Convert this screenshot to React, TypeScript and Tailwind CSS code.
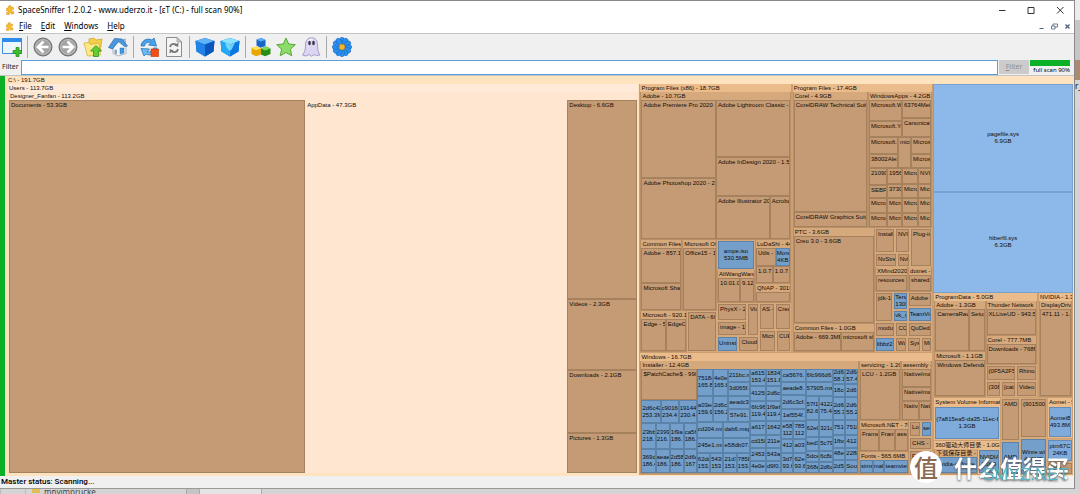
import type { CSSProperties, ReactNode } from "react";

type Tone = "tan" | "blue" | "sky" | "bright" | "light";

type Block = {
  kind: "leaf" | "group" | "row" | "col";
  size: number;
  label?: string;
  sub?: string;
  tone?: string;
  items?: Block[];
};

const leaf = (size: number, label: string, tone: Tone = "tan", sub?: string): Block => ({ kind: "leaf", size, label, tone, sub });
const file = (size: number, label: string, sub?: string): Block => leaf(size, label, "blue", sub);
const group = (size: number, label: string, tone: string, ...items: Block[]): Block => ({ kind: "group", size, label, tone, items });
const row = (size: number, ...items: Block[]): Block => ({ kind: "row", size, items });
const col = (size: number, ...items: Block[]): Block => ({ kind: "col", size, items });
const shaded = (block: Block): Block => ({ ...block, tone: "shaded" });

const LEAF_TONES: Record<string, string> = {
  tan: "bg-[#c49b74] border-[#a5815e]",
  light: "bg-[#ffe6d0] border-[#ffe6d0]",
  blue: "bg-[#739fca] border-[#5b82a8]",
  sky: "bg-[#7eabdb] border-[#648bb5]",
  bright: "bg-[#8db9ea] border-[#78a1d0]",
};

const GROUP_TONES: Record<string, string> = {
  root: "bg-[#ffe3bf] border-[#ffe3bf]",
  users: "bg-[#ffe9d9] border-[#ffe3bf]",
  profile: "bg-[#ffe6d0] border-[#ffe3bf]",
  top: "bg-[#eabb8b] border-[#cb9f72]",
  mid: "bg-[#d6a97c] border-[#b98f68]",
};

const USERS = group(633, "Users - 113.7GB", "users",
  group(1, "Designer_Fanfan - 113.2GB", "profile",
    row(1,
      leaf(296, "Documents - 53.3GB"),
      leaf(262, "AppData - 47.3GB", "light"),
      col(70,
        leaf(198, "Desktop - 6.6GB"),
        leaf(71, "Videos - 2.3GB"),
        leaf(63, "Downloads - 2.1GB"),
        leaf(40, "Pictures - 1.3GB"),
      ),
    ),
  ),
);

const PROGRAMS_X86 = group(152, "Program Files (x86) - 18.7GB", "top",
  group(148, "Adobe - 10.7GB", "mid",
    row(1,
      col(75, leaf(77, "Adobe Premiere Pro 2020 - 3.1GB"), leaf(61, "Adobe Photoshop 2020 - 2.4GB")),
      col(74,
        leaf(56, "Adobe Lightroom Classic - 2.1GB"),
        leaf(39, "Adobe InDesign 2020 - 1.5GB"),
        row(43, leaf(54, "Adobe Illustrator 2020"), leaf(20, "Acrobat")),
      ),
    ),
  ),
  shaded(row(111,
    col(77,
      row(70,
        group(42, "Common Files - 1.3GB", "mid", leaf(35, "Adobe - 857.1MB"), leaf(26, "Microsoft Shared")),
        group(35, "Microsoft Office", "mid", leaf(1, "Office15 - 1GB")),
      ),
      row(41,
        group(47, "Microsoft - 920.1MB", "mid", row(1, leaf(24, "Edge - 500MB"), leaf(20, "EdgeCore"))),
        leaf(30, "DATA - 600MB"),
      ),
    ),
    col(74,
      row(62,
        col(38,
          file(30, "ampe.iso", "530.5MB"),
          group(32, "AliWangWang", "mid", row(1, leaf(22, "10.01.03"), leaf(14, "9.12.1"))),
        ),
        col(36,
          group(44, "LuDaShi - 440MB", "mid",
            row(18, leaf(20, "Utils - 80MB"), file(14, "More", "4KB")),
            row(17, leaf(17, "1.0.7.1"), leaf(17, "1.0.7.2")),
          ),
          group(18, "QNAP - 301MB", "mid", leaf(1, "")),
        ),
      ),
      row(49,
        col(42,
          row(33, col(30, leaf(18, "PhysX - 200MB"), leaf(15, "image - 190MB")), leaf(12, "Vid")),
          row(15, file(21, "Uninstall"), leaf(20, "Cloud")),
        ),
        col(32,
          row(27, leaf(16, "AS - 1"), leaf(16, "Creo")),
          row(21, leaf(16, "Micro"), leaf(14, "CUE")),
        ),
      ),
    ),
  )),
);

const PROGRAMS = group(141, "Program Files - 17.4GB", "top",
  row(136,
    group(75, "Corel - 4.9GB", "mid",
      leaf(111, "CorelDRAW Technical Suite"),
      leaf(15, "CorelDRAW Graphics Suite"),
    ),
    group(64, "WindowsApps - 4.2GB", "mid",
      row(37,
        col(33, leaf(21, "Microsoft.Windows"), leaf(16, "Microsoft.YourPhone")),
        col(29, leaf(18, "63764Meitu"), leaf(19, "CanonicalGroup")),
      ),
      row(30,
        col(29, leaf(16, "Microsoft.Skype"), leaf(14, "38002Alexander")),
        leaf(13, "micro"),
        col(20, leaf(16, "Microsoft"), leaf(14, "Microsoft")),
      ),
      row(30,
        col(18, leaf(17, "21090P"), leaf(13, "SEBFox")),
        col(15, leaf(16, "19568"), leaf(14, "37308")),
        col(16, leaf(16, "Microso"), leaf(14, "Microso")),
        col(13, leaf(16, "NVIDIA"), leaf(14, "Micro")),
      ),
      row(29,
        col(18, leaf(1, "Microsoft"), leaf(1, "Microsoft")),
        col(15, leaf(1, "Micros"), leaf(1, "Micros")),
        col(16, leaf(1, "Micros"), leaf(1, "Micros")),
        col(13, leaf(1, "Micros"), leaf(1, "Micros")),
      ),
    ),
  ),
  shaded(row(123,
    col(82,
      group(95, "PTC - 3.6GB", "mid", leaf(1, "Creo 3.0 - 3.6GB")),
      group(28, "Common Files - 1.0GB", "mid", row(1, leaf(47, "Adobe - 669.3MB"), leaf(33, "microsoft shared"))),
    ),
    col(57,
      row(38,
        col(35,
          row(24, leaf(20, "Installer2"), leaf(15, "NVIDIA")),
          row(14, leaf(21, "NvStreamSrv"), leaf(13, "NvDLISR")),
        ),
        leaf(22, "Plug-ins"),
      ),
      row(24,
        group(33, "XMind2020", "mid", leaf(1, "resources - 1")),
        group(24, "dotnet - 200", "mid", leaf(1, "shared - 1")),
      ),
      row(30,
        leaf(18, "jdk-11"),
        col(14, file(18, "Tencent", "130M"), file(12, "vk_swift")),
        col(24, leaf(15, "Adobe Genuine"), file(15, "TeamViewer")),
      ),
      row(15, leaf(20, "modules"), leaf(12, "CCX"), leaf(24, "QuDedup")),
      row(14, file(20, "libbz2-1"), leaf(12, "Wac"), leaf(14, "Sys"), leaf(11, "Mic")),
    ),
  )),
);

const WINDOWS = group(122, "Windows - 16.7GB", "top",
  row(1,
    group(218, "Installer - 12.4GB", "mid",
      row(1,
        col(55,
          leaf(31, "$PatchCache$ - 990MB"),
          row(23, file(19, "2d6c42", "253.3M"), file(18, "c9016", "234.4"), file(18, "19144", "230.4")),
          row(25, file(14, "23bb", "218."), file(14, "2399", "216."), file(14, "1f9a", "186."), file(13, "ca56", "186.")),
          row(24, file(14, "369d", "186.4"), file(14, "aeae", "186."), file(14, "2d58", "186."), file(13, "2d6c", "167")),
        ),
        col(53,
          row(27, file(16, "7518c", "165.8"), file(15, "4e0e", "165.8"), col(22, file(13, "211bc.m"), file(14, "3d065f."))),
          row(26, file(16, "a03ec", "159.9"), file(15, "2d6cc", "156.2"), col(22, file(13, "aeadc3"), file(13, "57e91."))),
          row(15, file(1, "cd204.ms"), file(1, "dab6.msp")),
          row(15, file(1, "245e1.ms"), file(1, "e58db07.")),
          row(20, file(1, "62dc", "153."), file(1, "543f", "153."), file(1, "21d7", "153."), file(1, "7858", "153.")),
        ),
        col(31,
          row(17, file(1, "a615", "153.4"), file(1, "1834", "151.8")),
          row(15, file(1, "4125f"), file(1, "2d6c")),
          row(20, file(1, "6fc96", "119.4"), file(1, "1f9a6", "119.4")),
          row(13, file(1, "a617"), file(1, "1642")),
          row(13, file(1, "cd15b"), file(1, "211e")),
          row(13, file(1, "2453"), file(1, "543a")),
          row(12, file(1, "4e0e"), file(1, "d9f0.")),
        ),
        col(24,
          file(13, "ca5676."),
          file(13, "aeade8."),
          file(14, "2d6c3cf."),
          file(12, "1af554f."),
          row(17, file(1, "e58d", "112"), file(1, "785", "112")),
          row(14, file(1, "412"), file(1, "a03")),
          row(20, file(1, "3d7e", "93.6"), file(1, "62e", "93.6")),
        ),
        col(27,
          file(13, "6fc966d6."),
          file(14, "57905.ms"),
          row(24, file(1, "57f1", "82.6"), file(1, "4122", "75.4")),
          row(16, file(1, "62e0"), file(1, "321c")),
          row(14, file(1, "bed3"), file(1, "5c79")),
          row(11, file(1, "5dce"), file(1, "6c8d")),
          row(11, file(1, "368e"), file(1, "2d6c")),
        ),
        col(25,
          row(15, file(1, "2d6c", "58.1"), file(1, "2d6c", "57.4")),
          row(13, file(1, "18c4"), file(1, "2d6")),
          row(23, file(1, "2d6c", "55.3"), file(1, "2d6c", "55.2")),
          row(14, file(1, "7514"), file(1, "7518")),
          row(13, file(1, "1fbc"), file(1, "412")),
          row(12, file(1, "48e8"), file(1, "2288")),
          row(13, file(1, "2d58"), file(1, "Sour")),
        ),
      ),
    ),
    col(73,
      row(60,
        group(42, "servicing - 1.2GB", "mid", leaf(1, "LCU - 1.2GB")),
        group(31, "assembly - 1GB", "mid",
          leaf(18, "NativeImages"),
          leaf(14, "NativeImages"),
          row(18, leaf(17, "Native"), leaf(13, "Nati")),
        ),
      ),
      shaded(row(53,
        col(50,
          group(31, "Microsoft.NET - 700MB", "mid", row(1, leaf(19, "Framework"), leaf(16, "Frame"), leaf(13, "assem"))),
          group(22, "Fonts - 565.6MB", "mid", row(1, file(13, "simsun"), file(12, "malg"), file(24, "teamviewer"))),
        ),
        col(23,
          row(16, leaf(12, "Loc"), file(11, "setup")),
          leaf(13, "CHS - 8"),
          leaf(24, "Fonts"),
        ),
      )),
    ),
  ),
);

const SYSTEM = col(140,
  leaf(108, "pagefile.sys", "bright", "6.9GB"),
  leaf(100, "hiberfil.sys", "bright", "6.3GB"),
  row(105,
    group(105, "ProgramData - 5.0GB", "top",
      row(1,
        col(50,
          group(51, "Adobe - 1.3GB", "mid", row(1, leaf(33, "CameraRaw"), leaf(15, "Setup"))),
          group(44, "Microsoft - 1.1GB", "mid", leaf(1, "Windows Defender")),
        ),
        shaded(col(50,
          group(35, "Thunder Network", "mid", leaf(1, "XLLiveUD - 943.5MB")),
          group(29, "Corel - 777.7MB", "mid", leaf(1, "Downloads - 768MB")),
          row(31,
            col(29, leaf(15, "{0F5A2F5C"), row(16, leaf(1, "{308"), leaf(1, "{cat"))),
            col(20, leaf(15, "Rhinoceros"), leaf(16, "Video")),
          ),
        )),
      ),
    ),
    group(35, "NVIDIA - 1.3GB", "top", group(1, "DisplayDriver", "mid", leaf(1, "471.11 - 1.2GB"))),
  ),
  shaded(row(77,
    col(68,
      group(43, "System Volume Information", "top", leaf(1, "{7a815ea5-da35-11ec-b", "sky", "1.3GB")),
      group(34, "360驱动大师目录 - 1.0GB", "top",
        row(1,
          group(43, "下载保存目录 - 1GB", "mid", file(1, "nvidia-geforce")),
          file(22, "NVIDIA", "25KB"),
        ),
      ),
    ),
    col(19, leaf(43, "AMD - 1"), file(34, "AMD")),
    col(27, leaf(40, "{90150000"), file(37, "Winre.wim", "400MB")),
    col(26,
      group(41, "Aomei - 500", "top", leaf(1, "AomeiBoot", "sky", "493.8M")),
      leaf(23, "ptm67C", "sky", "24KB"),
      leaf(13, "Micr"),
    ),
  )),
);

const DRIVE = group(1, "C:\\ - 191.7GB", "root",
  row(1, USERS, col(294, row(268, PROGRAMS_X86, PROGRAMS), WINDOWS), SYSTEM),
);

function tracks(items: Block[]) {
  return items.map((i) => `minmax(0,${i.size}fr)`).join(" ");
}

// packed cells share their borders, the others keep a gap around them
function Cell({ block, packed = false }: { block: Block; packed?: boolean }) {
  const items = block.items ?? [];

  if (block.kind === "leaf") {
    const centered = block.tone !== "tan" && block.tone !== "light";
    const loose = !packed && block.tone !== "bright";
    return (
      <div
        className={`flex flex-col overflow-hidden border ${LEAF_TONES[block.tone ?? "tan"]} ${loose ? "m-px" : ""} ${
          centered ? "justify-center text-center leading-[7px]" : "pl-px leading-2"
        }`}
      >
        <div>{block.label}</div>
        {block.sub && <div>{block.sub}</div>}
      </div>
    );
  }

  const shade = block.tone === "shaded" ? "bg-[#d6a97c]" : "";

  if (block.kind === "row") {
    const style: CSSProperties = { gridTemplateColumns: tracks(items) };
    return (
      <div className={`grid h-full min-h-0 grid-rows-1 ${shade}`} style={style}>
        {items.map((item, i) => <Cell key={i} block={item} packed={packed} />)}
      </div>
    );
  }

  const style: CSSProperties = { gridTemplateRows: tracks(items) };
  if (block.kind === "col") {
    return (
      <div className={`grid h-full min-h-0 grid-cols-1 ${shade}`} style={style}>
        {items.map((item, i) => <Cell key={i} block={item} packed={packed} />)}
      </div>
    );
  }

  const inner = packed || block.tone === "mid" || block.tone === "profile";
  return (
    <div className={`flex h-full min-h-0 min-w-0 flex-col overflow-hidden border border-t-0 ${GROUP_TONES[block.tone ?? "mid"]}`}>
      <div className="h-2 shrink-0 overflow-hidden pl-px leading-2">{block.label}</div>
      <div className="grid min-h-0 flex-1 grid-cols-1" style={style}>
        {items.map((item, i) => <Cell key={i} block={item} packed={inner} />)}
      </div>
    </div>
  );
}

function Puzzle({ className }: { className: string }) {
  return (
    <svg viewBox="0 0 20 20" className={className}>
      <path
        d="M3 6.5 7 5.7C6 3.5 7.2 1 9.6 1s3.4 2.3 2.6 4.1l4.2-.6.6 4.4c-2-1-3.7.3-3.5 2.1.2 2 2.2 2.5 3.8 1.8l.3 4.6-5.2.9c.5-2-.7-3.2-2.2-3-1.6.2-2.3 1.7-1.5 3.5l-5 .7-.5-4.6c2 .5 3-.6 2.8-2-.2-1.5-1.5-2-3.1-1.6z"
        fill="#f5bd2b"
        stroke="#d18b10"
        strokeWidth="1"
      />
    </svg>
  );
}

function Cube({ light }: { light?: boolean }) {
  return (
    <>
      <path d="M.5 4 10 1l9.500 3-1 10.500L10 19.500l-8.500-5z" fill="#0a63cf" />
      <path d="M.5 4 10 1l9.500 3L10 7.500z" fill={light ? "#8be4ff" : "#5fb4f8"} />
      <path d="M.5 4 10 7.500v12l-8.500-5z" fill={light ? "#23a9f5" : "#1f83e8"} />
      <path d="M10 7.500 19.500 4l-1 10.500-8.500 5z" fill={light ? "#0c78e2" : "#0b56bd"} />
      {light && <path d="M5 5.600 10 7.500l5-1.900-3 6.400-2 2-3-3z" fill="#8de9ff" opacity=".75" />}
    </>
  );
}

const RoundArrow = ({ flip }: { flip?: boolean }) => (
  <g transform={flip ? "matrix(-1 0 0 1 20 0)" : undefined}>
    <circle cx="10" cy="10" r="9" fill="#8b8b8b" stroke="#6e6e6e" />
    <circle cx="10" cy="10" r="7.500" fill="#a4a4a4" stroke="#c9c9c9" strokeWidth=".8" />
    <path d="M10.500 4.500 5 10l5.500 5.500M5.500 10H15.500" fill="none" stroke="#fff" strokeWidth="2.600" />
  </g>
);

const TOOLS: ({ label: string; art: ReactNode } | null)[] = [
  {
    label: "New view",
    art: (
      <>
        <path d="M.5 1.500h19v15H.5z" fill="#eef7ff" stroke="#3e8fe0" />
        <path d="M0 1h20v4H0z" fill="#2d8bea" />
        <path d="M14 10.500h3V13.500h3v3h-3V19.500h-3v-3h-3v-3h3z" fill="#3fbf2e" stroke="#238517" strokeWidth=".7" />
      </>
    ),
  },
  null,
  { label: "Back", art: <RoundArrow /> },
  { label: "Forward", art: <RoundArrow flip /> },
  {
    label: "Parent folder",
    art: (
      <>
        <path d="m6 2 5-1 2 2 6-1-2 13-11 1z" fill="#f3cf4c" stroke="#caa024" strokeWidth=".7" />
        <path d="m1 6 5-.5 1.500 2L16 6l1.500 12-13 1z" fill="#fde988" stroke="#d4aa2d" strokeWidth=".7" />
        <path d="m13 8.500 5.500 5.500H15.500v5.500h-5V14H7.500z" fill="#62cd35" stroke="#2f8f18" strokeWidth=".8" />
      </>
    ),
  },
  {
    label: "Home",
    art: (
      <>
        <path d="M5 9v7.500l5 2.500 8-2.500V8L12 4z" fill="#f3f6f9" stroke="#8b9cac" strokeWidth=".7" />
        <path d="M15 2h2.500v4.500L15 5z" fill="#a6bfd5" stroke="#7f97ab" strokeWidth=".4" />
        <path d="m.5 10.500 6-9L14 2l5.500 7-3 .5L10.500 4.500l-6 7.500z" fill="#4a97de" stroke="#1f5f9f" strokeWidth=".6" />
        <path d="M6.500 12.500 9 13v4.500l-2.500-1z" fill="#8ba3b8" />
        <path d="M12 11h4v5l-4 1z" fill="#3c97e6" stroke="#2469a8" strokeWidth=".4" />
      </>
    ),
  },
  null,
  {
    label: "Restart scan",
    art: (
      <>
        <path d="M2 9C2.500 3.500 8 .5 13 3l2-2 2.500 8-8-1L12 5.500C9 4.500 6 6 5.500 9z" fill="#4aa3ec" stroke="#1765b3" strokeWidth=".7" />
        <path d="M18 11c-.5 5.500-6 8.500-11 6l-2 2L2 11.500l8.500.5L8 14.500c3 1 6-.5 6.500-3.500z" fill="#6cbcf5" stroke="#1765b3" strokeWidth=".7" />
        <path d="M12 12h7.500v7.500H12z" fill="#f04d17" stroke="#bf3208" strokeWidth=".6" />
      </>
    ),
  },
  {
    label: "Refresh",
    art: (
      <>
        <path d="M2.500.5H13L17.500 5v14.500h-15z" fill="#f4f4f4" stroke="#8c8c8c" />
        <path d="M13 .5V5h4.500z" fill="#c9c9c9" stroke="#8c8c8c" strokeWidth=".6" />
        <path d="M6 10c.5-3 4-4 6.300-2.300M14 12c-.5 3-4 4-6.300 2.300" fill="none" stroke="#777" strokeWidth="1.800" />
        <path d="m14.500 5.500-.3 4.500-4-1.500zM5.500 16.500l.3-4.500 4 1.500z" fill="#777" />
      </>
    ),
  },
  null,
  { label: "Less detail", art: <Cube /> },
  { label: "More detail", art: <Cube light /> },
  null,
  {
    label: "File classes",
    art: (
      <>
        <path d="m5.500 2.500 5-1.500 4 2v6l-5 1.800-4-2.300z" fill="#1766c9" />
        <path d="m5.500 2.500 5-1.500 4 2-5 1.500z" fill="#63aef5" />
        <path d="m.5 11 5-1.500 4.500 2v6L5 19.300.5 17z" fill="#e8a600" />
        <path d="m.5 11 5-1.500 4.500 2-5 1.700z" fill="#ffe25b" />
        <path d="m10 11.500 5-2 4.500 2V17L14 19.300 10 17.500z" fill="#268d15" />
        <path d="m10 11.500 5-2 4.500 2-5.500 2z" fill="#7cdb53" />
      </>
    ),
  },
  {
    label: "Tagging",
    art: <path d="m10 1 2.700 6 6.600.7-4.900 4.500 1.400 6.600-5.800-3.300-5.800 3.300 1.400-6.600L.7 7.700 7.300 7z" fill="#8ddb68" stroke="#58a838" strokeLinejoin="round" />,
  },
  {
    label: "Ghost",
    art: (
      <>
        <path d="M4.500 8C4.500 3 7 .7 10.500.7S16.500 3 16.500 8c0 4 .5 7.500 2.500 10l-3.500.5-2.500-1-2.500 1.800L8 17.500l-3 1.500-3.500-1C4 15 4.500 12 4.500 8z" fill="#ddd6f3" stroke="#a79cc9" strokeWidth="1" />
        <path d="M7 4c1-2 3.500-2.500 5-2-3 1-4 5-4.500 11z" fill="#f8f6ff" />
        <ellipse cx="8.500" cy="6" rx="1.300" ry="2.200" fill="#383147" />
        <ellipse cx="12.500" cy="6" rx="1.300" ry="2.200" fill="#383147" />
      </>
    ),
  },
  null,
  {
    label: "Settings",
    art: (
      <>
        {[0, 30, 60, 90, 120, 150, 180, 210, 240, 270, 300, 330].map((a) => (
          <ellipse key={a} cx="10" cy="4" rx="2.500" ry="3.800" fill="#2a8fee" stroke="#0f5fb8" strokeWidth=".5" transform={`rotate(${a} 10 10)`} />
        ))}
        <circle cx="10" cy="10" r="3" fill="#f2b52c" stroke="#a87a10" strokeWidth=".6" />
      </>
    ),
  },
];

const MENUS = ["File", "Edit", "Windows", "Help"];

function TitleBar() {
  return (
    <header className="flex h-[18px] shrink-0 items-center bg-white pl-[5px]">
      <Puzzle className="size-[10px]" />
      <h1 className="ml-[3px] flex-1 text-[8px] text-black">SpaceSniffer 1.2.0.2 - www.uderzo.it - [εT (C:) - full scan 90%]</h1>
      <div className="flex text-[#333]">
        <button aria-label="Minimize" className="grid h-[18px] w-[29px] place-items-center">
          <svg viewBox="0 0 8 8" className="size-2" fill="none" stroke="currentColor"><path d="M1 4.500h6.500" /></svg>
        </button>
        <button aria-label="Maximize" className="grid h-[18px] w-[29px] place-items-center">
          <svg viewBox="0 0 8 8" className="size-2" fill="none" stroke="currentColor"><path d="M1 1.500h6v6H1z" /></svg>
        </button>
        <button aria-label="Close" className="grid h-[18px] w-[29px] place-items-center">
          <svg viewBox="0 0 8 8" className="size-2" fill="none" stroke="currentColor"><path d="m1 1 6.500 6.500m0-6.500L1 7.500" /></svg>
        </button>
      </div>
    </header>
  );
}

function MenuBar() {
  return (
    <nav className="flex h-[15px] shrink-0 items-center border-b border-[#c4c4c4] bg-white pl-[5px] text-[8px] text-black">
      <Puzzle className="mr-[5px] size-[9px]" />
      <div className="flex flex-1 gap-[9px]">
        {MENUS.map((m) => (
          <button key={m} className="leading-3"><span className="underline">{m[0]}</span>{m.slice(1)}</button>
        ))}
      </div>
      <div className="flex text-[#4a6078]">
        <button aria-label="Minimize view" className="grid h-3 w-[13px] place-items-center">
          <svg viewBox="0 0 7 7" className="size-[7px]" fill="none" stroke="currentColor"><path d="M1.500 5.500h4" /></svg>
        </button>
        <button aria-label="Restore view" className="grid h-3 w-[13px] place-items-center">
          <svg viewBox="0 0 7 7" className="size-[7px]" fill="none" stroke="currentColor" strokeWidth=".8"><path d="M.5 3h3.500v3H.5zM2 3V1h4.500v3H4" /></svg>
        </button>
        <button aria-label="Close view" className="grid h-3 w-[13px] place-items-center">
          <svg viewBox="0 0 7 7" className="size-[7px]" fill="none" stroke="currentColor" strokeWidth="1.300"><path d="m1.500 1.500 4 4m0-4-4 4" /></svg>
        </button>
      </div>
    </nav>
  );
}

function Toolbar() {
  return (
    <div className="flex h-[25px] shrink-0 items-center bg-[#f0f0f0]">
      {TOOLS.map((tool, i) =>
        tool ? (
          <button key={i} aria-label={tool.label} className="grid w-[25px] place-items-center first:w-6">
            <svg viewBox="0 0 20 20" className="size-5">{tool.art}</svg>
          </button>
        ) : (
          <div key={i} className="flex w-[6px] justify-center"><div className="h-[22px] w-px bg-[#aaa]" /></div>
        ),
      )}
    </div>
  );
}

function FilterBar() {
  return (
    <div className="flex h-[17px] shrink-0 items-center border-b border-[#c4c4c4] bg-[#f0f0f0] pr-1 text-[7px] text-[#222]">
      <label htmlFor="filter" className="w-[21px] pl-[2px]">Filter</label>
      <input id="filter" type="text" className="h-[15px] min-w-0 flex-1 border border-[#5a9fda] bg-white px-1 outline-none" />
      <button className="ml-px h-[14px] w-[30px] bg-[#cbcbcb] text-[#8f8f8f]"><span className="underline">F</span>ilter</button>
      <div className="ml-px flex w-10 flex-col text-[6px] text-black">
        <div role="progressbar" aria-valuenow={90} aria-label="Scan progress" className="h-[6px] bg-[#0cb026]" />
        <span className="whitespace-nowrap text-right leading-[9px]">full scan 90%</span>
      </div>
    </div>
  );
}

export default function App() {
  return (
    <div className="relative flex h-screen flex-col overflow-hidden bg-[#dcdcdc] font-['Noto_Sans','Noto_Sans_CJK_SC',sans-serif]">
      <div className="flex min-h-0 flex-1">
        <div className="flex min-w-0 flex-1 flex-col border-t border-r border-[#8a8a8a] bg-[#f0f0f0]">
          <TitleBar />
          <MenuBar />
          <Toolbar />
          <FilterBar />
          <main className="flex min-h-0 flex-1 bg-[#ffe3bf] font-['Liberation_Sans','Noto_Sans_CJK_SC',sans-serif] text-[6px] text-[#120c06]">
            <div className="w-[5px] bg-[#0cb026]" />
            <div className="min-w-0 flex-1 pl-px whitespace-nowrap">
              <Cell block={DRIVE} />
            </div>
          </main>
          <footer className="h-[13px] shrink-0 border-b border-[#999] bg-[#f0f0f0] pl-px font-['Roboto',sans-serif] text-[8px] leading-3 font-medium text-black">
            Master status: Scanning...
          </footer>
        </div>
        <div className="flex w-[5px] flex-col bg-[#c6c6c6]">
          <div className="h-5 bg-[#ececec]" />
          <div className="h-10" />
          <div className="h-5 bg-[#a98b70]" />
          <div className="h-7 overflow-hidden bg-[#d5d5d5] text-[8px] text-black">r_</div>
          <div className="flex-1 bg-[#d2d2d2]" />
        </div>
      </div>

      <div className="flex h-[5px] shrink-0 overflow-hidden bg-[#d4d4d4] text-[8px] leading-[5px] text-[#444]">
        <div className="w-[26px] border-x border-[#bbb]" />
        <div className="ml-[6px] h-1 w-2 bg-[#e3bd4f]" />
        <div className="ml-[4px] flex-none">mnyimprucke</div>
        <div className="ml-[90px] w-[14px] border-x border-[#aaa] bg-[#c4c4c4]" />
        <div className="w-[62px] border-r border-[#aaa] bg-[#e4e4e4]" />
      </div>

      <div className="pointer-events-none absolute right-[11px] bottom-[11px] flex items-center gap-3 font-['Noto_Sans_CJK_SC',sans-serif]">
        <div className="grid size-8 place-items-center rounded-full bg-white text-[24px] leading-8 font-medium text-[#8a6a50]">值</div>
        <div className="relative text-[23px] leading-8 font-bold text-white drop-shadow-[0_1px_1px_#555]">
          什么值得买
          <div className="absolute right-0 bottom-0 font-['Liberation_Sans',sans-serif] text-[17px] leading-4 font-normal text-[#55b6c4]">SMYZ.NET</div>
        </div>
      </div>
    </div>
  );
}
